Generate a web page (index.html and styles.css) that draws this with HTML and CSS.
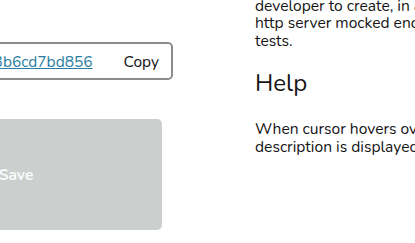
FILE: index.html
```html
<!DOCTYPE html>
<html lang="en">
  <head>
    <meta charset="UTF-8" />
    <meta name="viewport" content="width=device-width, initial-scale=1.0" />
    <title>Mock Server</title>
    <link rel="stylesheet" href="styles.css">
  </head>
  <body>
    <main class="page">
      <section class="editor">
        <div class="url-box">
          <a class="mock-url" href="#">http://localhost:8080/mocks/5f2e1a9c3b6cd7bd856</a>
          <button class="copy-button">Copy</button>
        </div>
        <button class="save-button" disabled>Save</button>
      </section>
      <aside class="sidebar">
        <p class="intro">
          Mock server is a small tool that allows a<br>
          developer to create, in a few clicks, an<br>
          http server mocked endpoints for their<br>
          tests.
        </p>
        <h2>Help</h2>
        <p>
          When cursor hovers over a field, its<br>
          description is displayed here.
        </p>
      </aside>
    </main>
  </body>
</html>
```

FILE: styles.css
```css
/* Reset default styles */
* {
  margin: 0;
  padding: 0;
  box-sizing: border-box;
}

body {
  font-family: "Nunito", "Lato", "Noto Sans", sans-serif;
  color: #151515;
  background-color: #fff;
  overflow: hidden;
}

.page {
  display: flex;
  gap: 82px;
}

/* left column, scrolled partly out of view */
.editor {
  flex: none;
  display: flex;
  flex-direction: column;
  width: 373px;
  margin-left: -200px;
  padding-top: 42px;
}

.url-box {
  display: flex;
  justify-content: flex-end;
  align-items: center;
  gap: 31px;
  height: 38px;
  border: 2px solid #8c8c8c;
  border-radius: 5px;
  overflow: hidden;
  white-space: nowrap;
}

.mock-url {
  color: #2a7ea3;
  font-size: 15.5px;
}

.copy-button {
  background: none;
  border: none;
  font-family: inherit;
  font-size: 15.5px;
  color: #111;
  padding-right: 12px;
  cursor: pointer;
}

.save-button {
  align-self: flex-end;
  width: 292px;
  height: 111px;
  margin: 39px 11px 0 0;
  background-color: #cbd0cf;
  border: none;
  border-radius: 5px;
  color: #fafafa;
  font-family: inherit;
  font-size: 15.5px;
  font-weight: bold;
}

.sidebar {
  flex: none;
  white-space: nowrap;
  font-size: 15.6px;
  line-height: 17.5px;
}

.intro {
  margin-top: -20px;
}

.sidebar h2 {
  font-size: 24px;
  font-weight: normal;
  line-height: 30px;
  margin: 18px 0 23px;
}
```
